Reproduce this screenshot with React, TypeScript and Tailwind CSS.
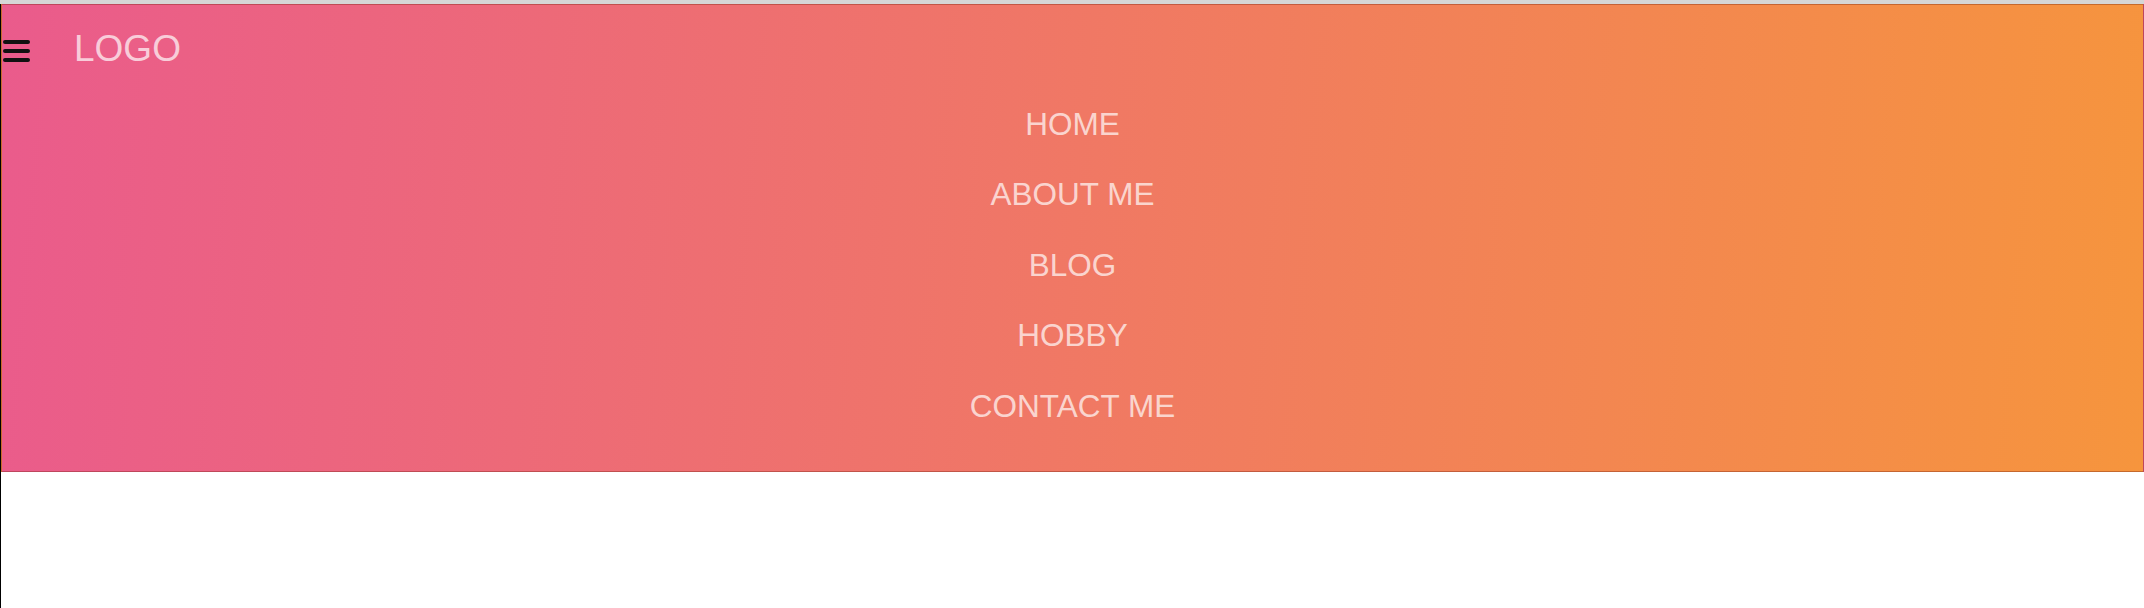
import React from "react";

const items = ["HOME", "ABOUT ME", "BLOG", "HOBBY", "CONTACT ME"];

export default function App() {
  return (
    <div className="flex h-[608px] w-[2144px] flex-col bg-white font-['Liberation_Sans',Arial,sans-serif]">
      <div className="h-[4px] w-full shrink-0 bg-[#d6d6d6]" />
      <div className="flex flex-1">
        <div className="w-[1px] shrink-0 bg-black" />
        <div className="flex flex-1 flex-col">
          <header className="flex h-[468px] flex-col border border-[rgba(110,30,10,0.35)] bg-[linear-gradient(95deg,#ea5b8c_0%,#f6953d_100%)]">
            <div className="flex h-[84px] items-start">
              <div className="ml-[1px] mt-[35px] flex w-[27px] flex-col gap-[5px]">
                <span className="block h-[4px] w-full rounded-full bg-[#111]" />
                <span className="block h-[4px] w-full rounded-full bg-[#111]" />
                <span className="block h-[4px] w-full rounded-full bg-[#111]" />
              </div>
              <div className="ml-[44px] mt-[25px] text-[37px] leading-none text-white/70">LOGO</div>
            </div>
            <ul className="flex flex-col items-center">
              {items.map((t) => (
                <li key={t} className="flex h-[70.5px] items-center text-[31.5px] text-white/70">
                  {t}
                </li>
              ))}
            </ul>
          </header>
        </div>
      </div>
    </div>
  );
}
